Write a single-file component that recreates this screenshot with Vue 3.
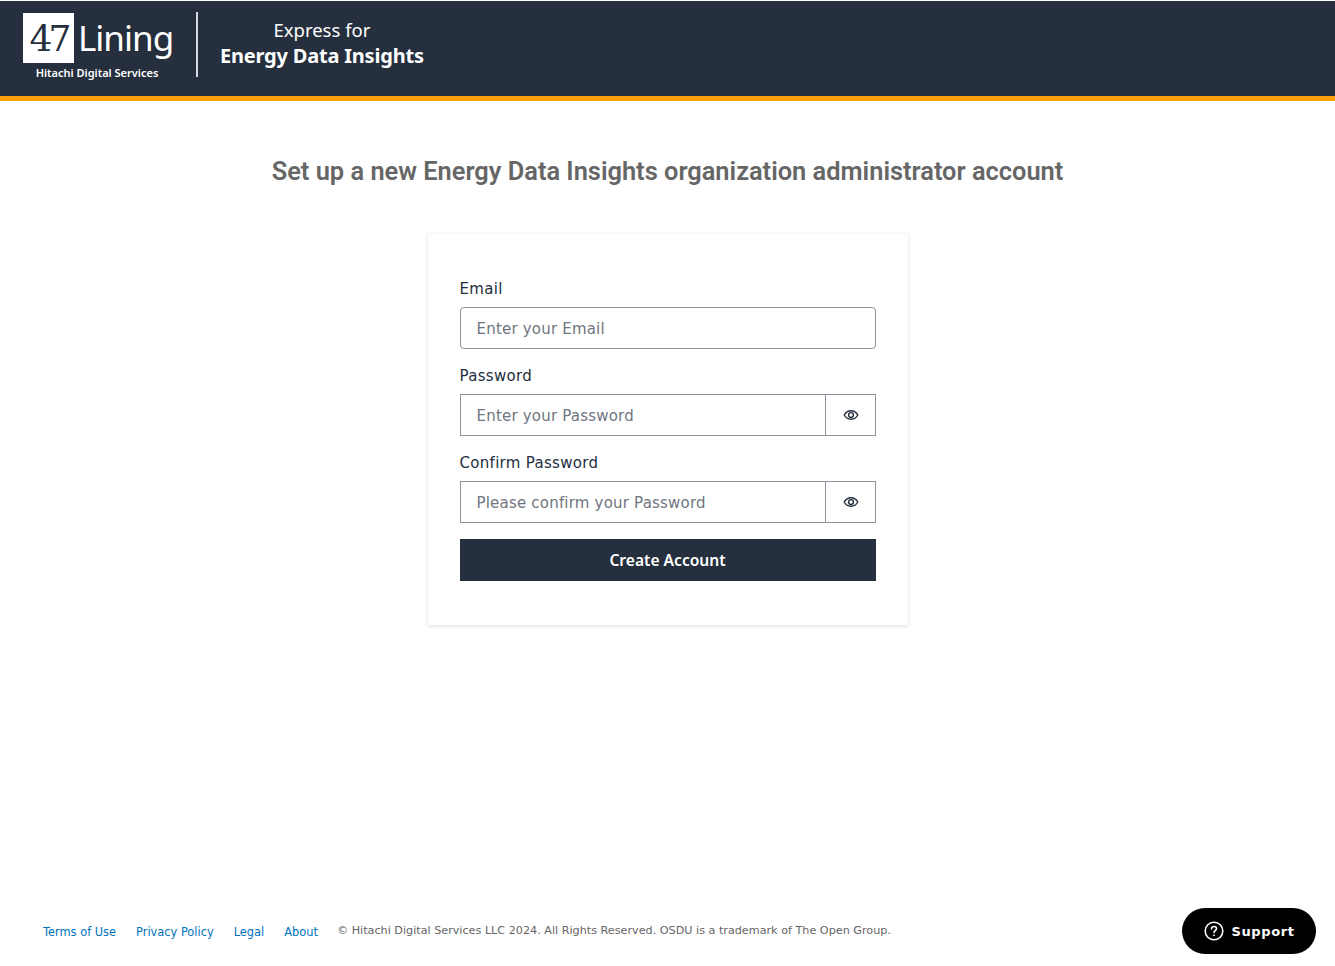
<template>
  <div class="page">
    <header class="top-bar">
      <div class="logo">
        <div class="logo-row">
          <span class="logo-box">47</span>
          <span class="logo-name">Lining</span>
        </div>
        <div class="logo-sub">Hitachi Digital Services</div>
      </div>
      <div class="divider"></div>
      <div class="product">
        <div class="product-small">Express for</div>
        <div class="product-big">Energy Data Insights</div>
      </div>
    </header>

    <main class="content">
      <h1 class="title">Set up a new Energy Data Insights organization administrator account</h1>

      <form class="card" @submit.prevent>
        <label class="label" for="email">Email</label>
        <input id="email" class="input rounded" type="text" placeholder="Enter your Email" />

        <template v-for="field in passwordFields" :key="field.id">
          <label class="label" :for="field.id">{{ field.label }}</label>
          <div class="input-group">
            <input :id="field.id" class="input" type="password" :placeholder="field.placeholder" />
            <button class="eye-btn" type="button" aria-label="show password">
              <svg width="16" height="16" viewBox="0 0 16 16" fill="none" stroke="#232f3e" stroke-width="1.4">
                <path d="M1.2 8C2.8 5.2 5.2 3.8 8 3.8s5.2 1.4 6.8 4.2c-1.6 2.8-4 4.2-6.800 4.200S2.800 10.800 1.200 8z" />
                <circle cx="8" cy="8" r="2.400" />
              </svg>
            </button>
          </div>
        </template>

        <button class="submit" type="submit">Create Account</button>
      </form>
    </main>

    <footer class="footer">
      <a class="link" href="#">Terms of Use</a>
      <a class="link" href="#">Privacy Policy</a>
      <a class="link" href="#">Legal</a>
      <a class="link" href="#">About</a>
      <span class="copy">© Hitachi Digital Services LLC 2024. All Rights Reserved. OSDU is a trademark of The Open Group.</span>
    </footer>

    <button class="support" type="button">
      <svg width="20" height="20" viewBox="0 0 20 20" fill="none" stroke="#fff" stroke-width="1.600">
        <circle cx="10" cy="10" r="8.800" />
        <path d="M7.500 7.900c0-1.500 1.100-2.400 2.500-2.400s2.500.9 2.500 2.200c0 1.900-2.500 1.900-2.500 3.900" stroke-linecap="round" />
        <circle cx="10" cy="14.300" r=".6" fill="#fff" stroke-width=".8" />
      </svg>
      Support
    </button>
  </div>
</template>

<script setup>
const passwordFields = [
  { id: 'password', label: 'Password', placeholder: 'Enter your Password' },
  { id: 'confirm', label: 'Confirm Password', placeholder: 'Please confirm your Password' },
]
</script>

<style>
html,
body {
  margin: 0;
  background: #fff;
}
</style>

<style scoped>
.page {
  min-height: 966px;
  display: flex;
  flex-direction: column;
  box-sizing: border-box;
  font-family: "DejaVu Sans", sans-serif;
  color: #232f3e;
}

.top-bar {
  height: 100px;
  box-sizing: border-box;
  margin-top: 1px;
  display: flex;
  align-items: center;
  padding: 0 0 8px 23px;
  background: #262f3e;
  border-bottom: 5px solid #ff9f00;
  color: #fff;
  font-family: "Noto Sans", sans-serif;
}

.logo {
  width: 148px;
  margin-top: 5px;
}

.logo-row {
  display: flex;
  align-items: center;
  height: 50px;
}

.logo-box {
  flex-shrink: 0;
  width: 51px;
  height: 50px;
  background: #fff;
  color: #262f3e;
  font-family: "DejaVu Serif", serif;
  font-size: 36px;
  letter-spacing: -4px;
  line-height: 52px;
  text-align: center;
}

.logo-name {
  margin-left: 4px;
  font-family: "Noto Sans", sans-serif;
  font-weight: 400;
  font-size: 35px;
  letter-spacing: -1px;
  line-height: 52px;
  white-space: nowrap;
}

.logo-sub {
  margin-top: 2px;
  text-align: center;
  font-size: 11px;
  font-weight: 600;
  line-height: 16px;
  white-space: nowrap;
}

.divider {
  width: 2px;
  height: 65px;
  margin-left: 25px;
  background: #d5d9dd;
}

.product {
  margin-left: 22px;
  margin-top: -4px;
  text-align: center;
}

.product-small {
  font-size: 18.500px;
  line-height: 25px;
  font-weight: 400;
}

.product-big {
  margin-top: 2px;
  font-size: 20px;
  line-height: 24px;
  font-weight: 700;
  letter-spacing: -0.2px;
}

.content {
  flex: 1;
  display: flex;
  flex-direction: column;
  align-items: center;
}

.title {
  margin: 53px 0 46px;
  font-family: "Roboto", sans-serif;
  font-size: 25.400px;
  line-height: 34px;
  font-weight: 600;
  color: #666;
  white-space: nowrap;
}

.card {
  width: 480px;
  height: 391px;
  box-sizing: border-box;
  padding: 44px 32px 0;
  background: #fff;
  box-shadow: 0 1px 4px rgba(0, 28, 36, 0.15);
}

.label {
  display: block;
  padding-top: 2px;
  font-size: 15px;
  line-height: 18px;
  letter-spacing: 0.3px;
  margin-bottom: 9px;
}

.input {
  display: block;
  flex: 1;
  min-width: 0;
  width: 100%;
  height: 42px;
  box-sizing: border-box;
  padding: 2px 16px 0;
  border: 1px solid #8c949e;
  background: #fff;
  font-family: inherit;
  font-size: 15px;
  letter-spacing: 0.2px;
  color: #232f3e;
  outline: none;
}

.input::placeholder {
  color: #6f7680;
  opacity: 1;
}

.input.rounded {
  border-radius: 4px;
  margin-bottom: 16px;
}

.input-group {
  display: flex;
  margin-bottom: 16px;
}

.eye-btn {
  width: 51px;
  height: 42px;
  margin-left: -1px;
  flex-shrink: 0;
  display: flex;
  align-items: center;
  justify-content: center;
  padding: 0 0 0 1px;
  background: #fff;
  border: 1px solid #8c949e;
}

.submit {
  display: block;
  width: 100%;
  height: 42px;
  border: none;
  background: #262f3e;
  color: #fff;
  font-family: "Noto Sans", sans-serif;
  font-size: 15.600px;
  font-weight: 600;
}

.footer {
  display: flex;
  align-items: flex-start;
  padding: 0 0 26px 43px;
  font-size: 11.400px;
  line-height: 16px;
}

.link {
  margin-right: 20px;
  padding-top: 2px;
  color: #0073bb;
  text-decoration: none;
}

.copy {
  margin-left: -1px;
  padding-top: 1px;
  color: #666;
  font-size: 11.200px;
}

.support {
  position: fixed;
  left: 1182px;
  top: 908px;
  width: 134px;
  height: 46px;
  display: flex;
  align-items: center;
  justify-content: center;
  gap: 8px;
  padding: 0;
  border: none;
  border-radius: 23px;
  background: #000;
  color: #fff;
  font-family: "DejaVu Sans", sans-serif;
  font-size: 13px;
  font-weight: 700;
  letter-spacing: 0.6px;
}
</style>
